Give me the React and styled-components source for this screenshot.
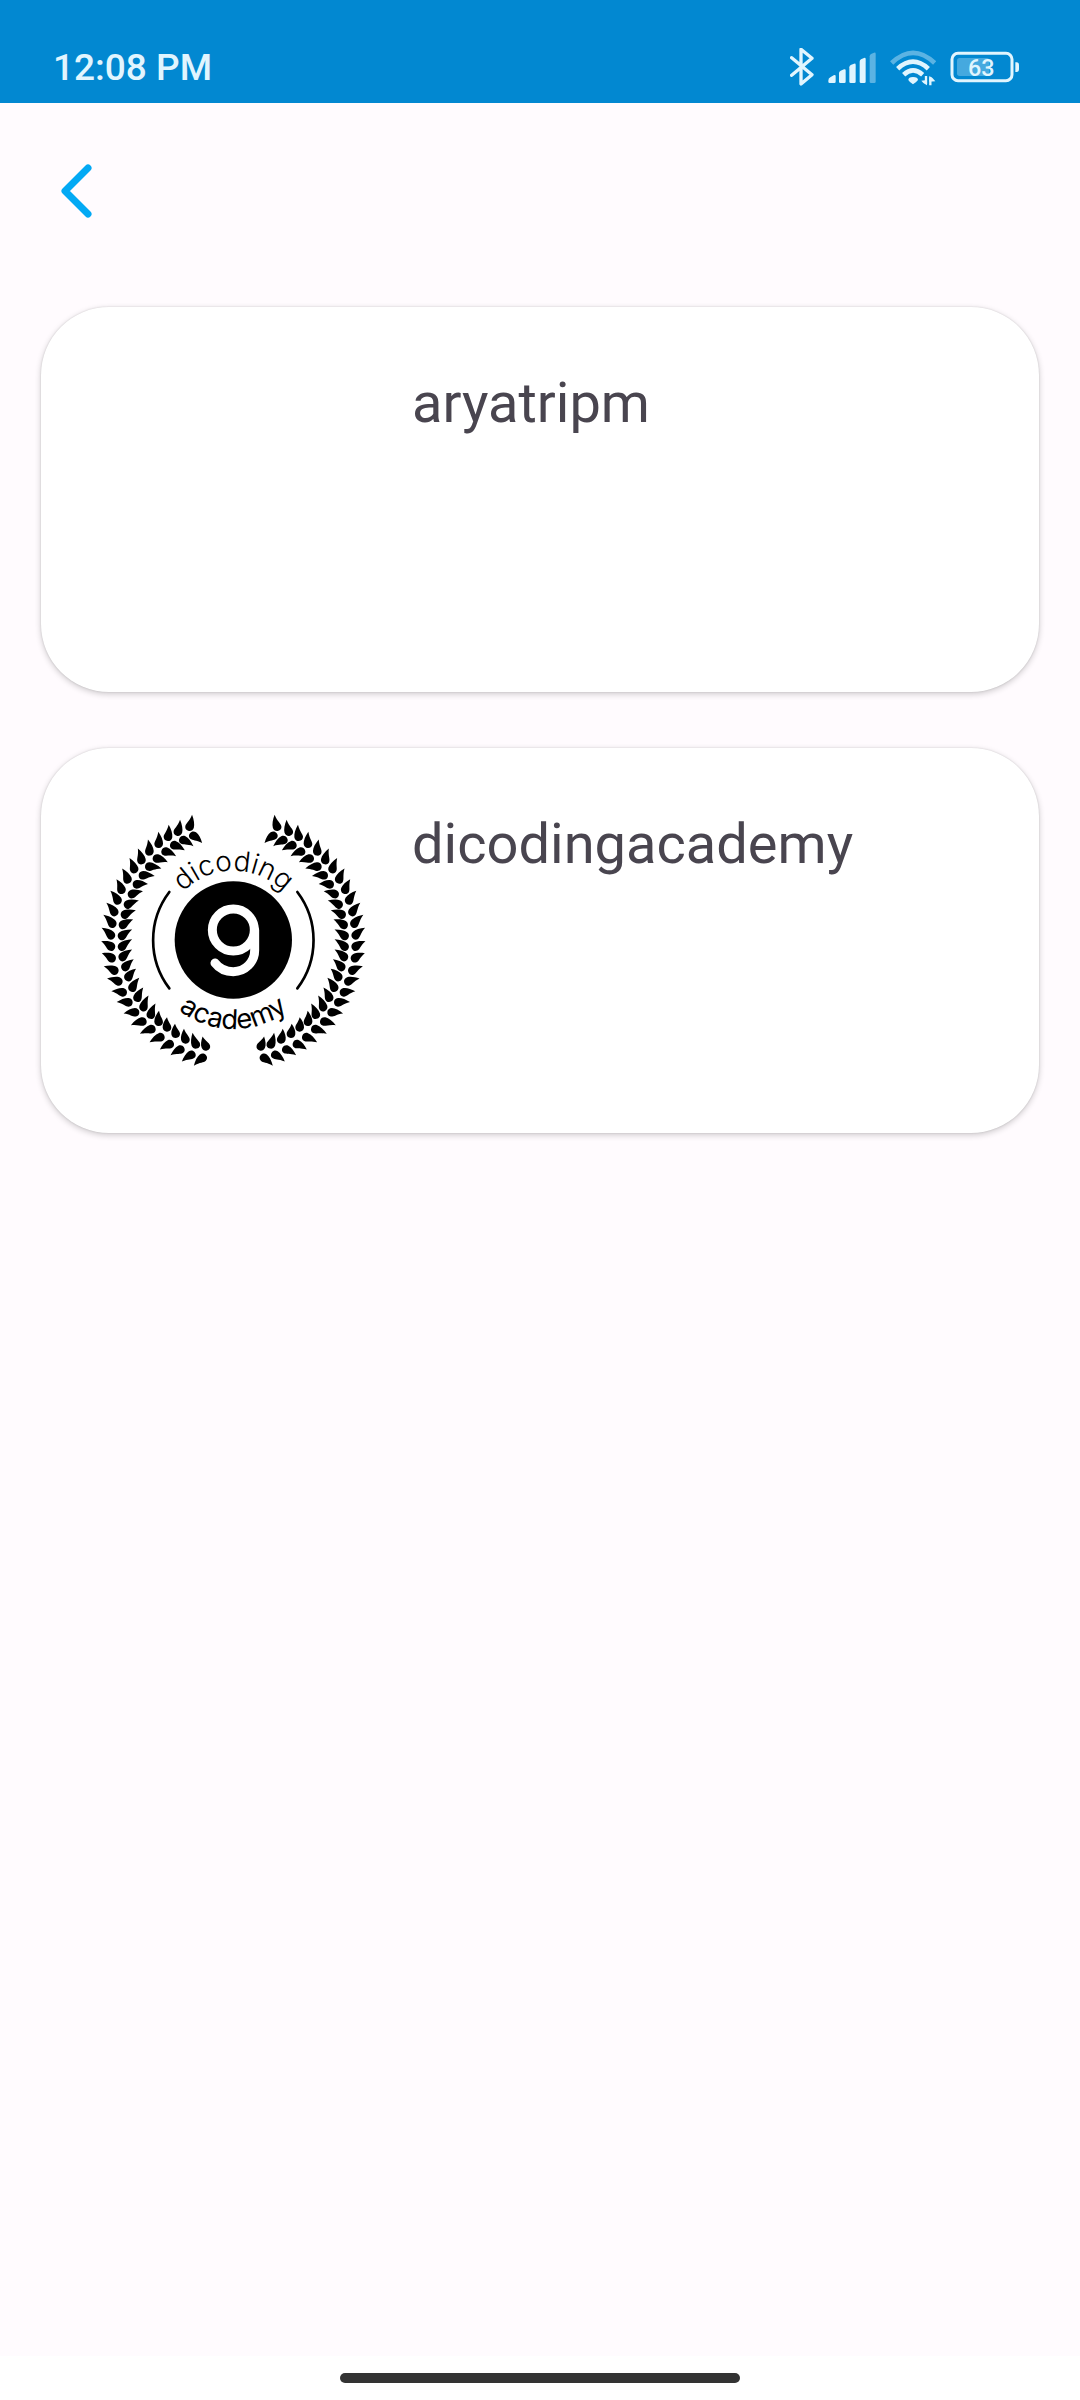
import React from "react";
import styled, { createGlobalStyle } from "styled-components";

const GlobalStyle = createGlobalStyle`
  *, *::before, *::after { box-sizing: border-box; }
  body {
    margin: 0;
    background: #fffbfe;
    font-family: Roboto, "Noto Sans", sans-serif;
  }
`;

const Page = styled.div`
  display: flex;
  flex-direction: column;
  min-height: 100vh;
`;

const StatusBar = styled.div`
  display: flex;
  align-items: center;
  justify-content: space-between;
  height: 103px;
  padding: 32px 60px 0 53px;
  background: #0288d1;
  color: #e1f5fe;
`;

const Clock = styled.time`
  font-size: 37px;
  line-height: 44px;
  font-weight: 500;
`;

const StatusIcons = styled.div`
  display: flex;
  align-items: center;
  gap: 14px;
`;

const Icon = styled.svg`
  display: block;
  flex: none;
`;

const BatteryLevel = styled.text`
  font-family: Roboto, sans-serif;
  font-size: 70px;
  font-weight: 500;
  text-anchor: middle;
`;

const Header = styled.header`
  padding: 52px 40px 80px;
`;

const BackButton = styled.button`
  display: flex;
  align-items: center;
  justify-content: center;
  width: 72px;
  height: 72px;
  padding: 0;
  border: 0;
  background: none;
  color: #03a9f4;
  cursor: pointer;
`;

const FavoriteList = styled.ul`
  display: flex;
  flex: 1;
  flex-direction: column;
  gap: 56px;
  margin: 0;
  padding: 0 41px;
  list-style: none;
`;

const Card = styled.li`
  display: flex;
  gap: 41px;
  padding: 55px;
  border-radius: 68px;
  background: #fff;
  box-shadow: 0 2px 6px rgba(0, 0, 0, 0.2), 0 0 2px rgba(0, 0, 0, 0.14);
`;

const Avatar = styled.div`
  flex: none;
  width: 275px;
  height: 275px;
`;

const UserName = styled.h2`
  margin: 0;
  padding-top: 9px;
  color: #49454f;
  font-size: 56px;
  line-height: 64px;
  font-weight: 400;
`;

const NavigationBar = styled.footer`
  display: flex;
  justify-content: center;
  height: 44px;
  padding-top: 17px;
  background: #fff;
`;

const Handle = styled.div`
  width: 400px;
  height: 10px;
  border-radius: 5px;
  background: #333;
`;

const CurvedText = styled.text`
  font-family: Inter, Lato, sans-serif;
  font-size: ${(p) => p.$size}px;
  font-weight: ${(p) => p.$weight};
  text-anchor: middle;
`;

/* Each leaf: tip x, tip y, body x, body y */
const outerLeaves = [
  [335, 75, 329, 109], [299, 90, 294, 124], [265, 105, 264, 139],
  [234, 126, 236, 160], [203, 150, 208, 183], [173, 177, 184, 209],
  [148, 205, 162, 236], [126, 237, 142, 267], [109, 269, 124, 298],
  [91, 304, 112, 330], [79, 340, 102, 365], [70, 376, 96, 400],
  [65, 415, 92, 435], [64, 455, 92, 469], [66, 491, 94, 504],
  [72, 530, 102, 541], [82, 567, 114, 574], [95, 605, 127, 607],
  [111, 637, 144, 637], [132, 671, 164, 667], [154, 706, 186, 695],
  [181, 732, 213, 718], [210, 757, 240, 742], [241, 779, 268, 763],
  [273, 796, 300, 779], [307, 815, 333, 795], [343, 827, 367, 804],
];

const innerLeaves = [
  [365, 159, 341, 138], [339, 169, 311, 151], [313, 181, 284, 166],
  [287, 199, 258, 185], [262, 217, 232, 206], [243, 236, 209, 230],
  [223, 259, 190, 256], [203, 283, 172, 283], [188, 305, 157, 312],
  [176, 333, 145, 343], [167, 362, 136, 373], [159, 390, 130, 404],
  [156, 420, 127, 437], [156, 449, 127, 469], [156, 480, 129, 500],
  [161, 509, 137, 530], [168, 538, 146, 560], [178, 565, 158, 592],
  [190, 594, 173, 622], [206, 618, 191, 650], [227, 642, 213, 673],
  [238, 663, 236, 694], [262, 683, 261, 711], [286, 702, 287, 730],
  [313, 717, 316, 747], [339, 729, 347, 762], [369, 740, 377, 768],
];

function Leaf({ points: [tipX, tipY, bodyX, bodyY], mirrored }) {
  const length = Math.hypot(tipX - bodyX, tipY - bodyY);
  const angle = (Math.atan2(tipX - bodyX, bodyY - tipY) * 180) / Math.PI;
  const side = mirrored ? -1 : 1;
  return (
    <path
      transform={`translate(${bodyX} ${bodyY}) rotate(${angle}) scale(${side} 1)`}
      d={`M1 ${-length - 1}C9 ${-length * 0.65} 14 -8 13 2C12 10 6 14 0 14C-8 14 -13 9 -13 2C-13 -7 -4 -13 1 ${-length - 1}Z`}
    />
  );
}

function LaurelBranch() {
  return (
    <>
      {outerLeaves.map((points) => <Leaf key={points.join()} points={points} />)}
      {innerLeaves.map((points) => <Leaf key={points.join()} points={points} mirrored />)}
      <path d="M268 306A239 239 0 0 0 268 595" fill="none" stroke="#000" strokeWidth="8" strokeLinecap="round" />
    </>
  );
}

function AcademyLogo() {
  return (
    <Icon width="275" height="275" viewBox="48 39 825 825" role="img" aria-label="dicoding academy">
      <LaurelBranch />
      <g transform="translate(920 0) scale(-1 1)">
        <LaurelBranch />
      </g>
      <circle cx="460" cy="450" r="176" />
      <g fill="none" stroke="#fff" strokeWidth="27" strokeLinecap="round">
        <circle cx="460" cy="420" r="63" />
        <path d="M524 420V481A64 64 0 0 1 460 545C434 545 418 536 405 519" />
      </g>
      <path id="upper-arc" d="M252 450A208 208 0 0 1 668 450" fill="none" />
      <path id="lower-arc" d="M193 450A267 267 0 0 0 727 450" fill="none" />
      <CurvedText $size={84} $weight={300}>
        <textPath href="#upper-arc" startOffset="50%">dicoding</textPath>
      </CurvedText>
      <CurvedText $size={82} $weight={400}>
        <textPath href="#lower-arc" startOffset="50%">academy</textPath>
      </CurvedText>
    </Icon>
  );
}

function BluetoothIcon() {
  return (
    <Icon width="24" height="40" viewBox="63 51 72 120" fill="none" stroke="currentColor" strokeWidth="10" strokeLinecap="round" strokeLinejoin="round" aria-hidden="true">
      <path d="M68 80L129 131L96 159V55L129 82L68 133" />
    </Icon>
  );
}

function SignalIcon() {
  return (
    <Icon width="48" height="40" viewBox="177 51 144 120" fill="currentColor" aria-hidden="true">
      <path d="M178 149Q178 142 184 139L194 133Q200 130 200 136V152Q200 156 196 156H182Q178 156 178 152Z" />
      <path d="M210 126Q210 121 215 119L225 115Q230 113 230 118V152Q230 156 226 156H214Q210 156 210 152Z" />
      <path d="M241 109Q241 104 245 102L255 98Q260 96 260 101V152Q260 156 256 156H245Q241 156 241 152Z" />
      <path d="M272 92Q272 87 276 85L285 81Q290 79 290 84V152Q290 156 286 156H276Q272 156 272 152Z" />
      <path opacity="0.4" d="M302 76Q302 71 306 69L315 65Q320 63 320 68V152Q320 156 316 156H306Q302 156 302 152Z" />
    </Icon>
  );
}

function WifiIcon() {
  return (
    <Icon width="46" height="40" viewBox="359 51 138 120" fill="none" stroke="currentColor" strokeWidth="14" aria-hidden="true">
      <path opacity="0.4" d="M364 96Q428 35 493 96" />
      <path d="M382 113Q428 71 474 113" />
      <path d="M400 131Q428 105 457 131" />
      <path d="M414 147Q414 138 428 138Q443 138 443 147Q439 153 428 160Q417 153 414 147Z" fill="currentColor" stroke="none" />
      <path d="M467 135V159M480 163V139" strokeWidth="7" />
      <path d="M453 149L470 147V163Q458 157 453 149ZM477 135Q490 141 495 151L477 152Z" fill="currentColor" stroke="none" />
    </Icon>
  );
}

function BatteryIcon() {
  return (
    <Icon width="70" height="40" viewBox="542 51 210 120" fill="currentColor" role="img" aria-label="Battery 63 percent">
      <rect x="548" y="67" width="180" height="82" rx="18" fill="none" stroke="currentColor" strokeWidth="9" />
      <rect x="563" y="81" width="97" height="54" rx="8" opacity="0.3" />
      <path d="M738 94H742Q749 94 749 103V114Q749 123 742 123H738Z" />
      <BatteryLevel x="636" y="135">63</BatteryLevel>
    </Icon>
  );
}

function ChevronIcon() {
  return (
    <Icon width="32" height="54" viewBox="0 0 32 54" fill="none" stroke="currentColor" strokeWidth="7" strokeLinecap="round" strokeLinejoin="round" aria-hidden="true">
      <path d="M28 4L5 27L28 50" />
    </Icon>
  );
}

const users = [
  { name: "aryatripm" },
  { name: "dicodingacademy", Logo: AcademyLogo },
];

export default function App() {
  return (
    <Page>
      <GlobalStyle />
      <StatusBar>
        <Clock dateTime="12:08">12:08 PM</Clock>
        <StatusIcons>
          <BluetoothIcon />
          <SignalIcon />
          <WifiIcon />
          <BatteryIcon />
        </StatusIcons>
      </StatusBar>
      <Header>
        <BackButton type="button" aria-label="Back">
          <ChevronIcon />
        </BackButton>
      </Header>
      <FavoriteList>
        {users.map(({ name, Logo }) => (
          <Card key={name}>
            <Avatar>{Logo && <Logo />}</Avatar>
            <UserName>{name}</UserName>
          </Card>
        ))}
      </FavoriteList>
      <NavigationBar>
        <Handle />
      </NavigationBar>
    </Page>
  );
}
